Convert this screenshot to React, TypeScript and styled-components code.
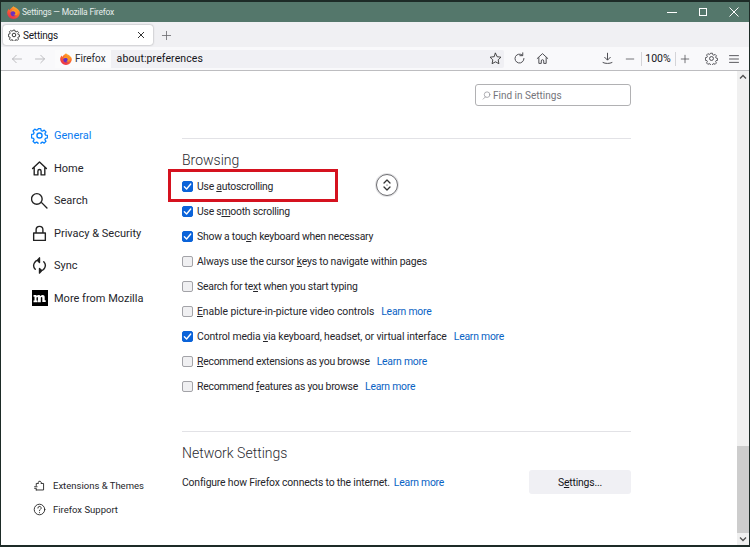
import React from "react";
import styled, { createGlobalStyle } from "styled-components";

const Global = createGlobalStyle`
  html, body { margin: 0; padding: 0; background: #fff; }
  #root { width: 750px; height: 547px; overflow: hidden; }
  * { box-sizing: border-box; }
`;

const FONT = `Roboto, "Open Sans", "Liberation Sans", sans-serif`;

const Window = styled.div`
  width: 750px; height: 547px; display: flex; flex-direction: column;
  border: solid #1d2b27; border-width: 2px 1px 2px 1px;
  font-family: ${FONT}; color: #15141a; background: #fff; overflow: hidden;
`;
const TitleBar = styled.div`
  height: 20px; flex: none; background: #54776b; display: flex; align-items: center;
  padding-left: 6px; color: #e6eeeb; font-size: 8.5px; letter-spacing: -0.2px; gap: 2px;
`;
const TitleText = styled.span`flex: 1;`;
const WinButtons = styled.div`display: flex; align-items: center; color: #fff;`;
const WinButton = styled.div`width: 31px; height: 20px; display: flex; align-items: center; justify-content: center;`;
const TabStrip = styled.div`
  height: 25px; flex: none; background: #f0f0f3; display: flex; align-items: flex-start; padding: 3px 0 0 2px;
`;
const Tab = styled.div`
  width: 150px; height: 20px; background: #fff; border-radius: 3px; box-shadow: 0 0 2px rgba(0,0,0,.4);
  display: flex; align-items: center; padding: 0 8px 0 5px; gap: 3px; font-size: 10px; letter-spacing: -0.2px; color: #15141a;
`;
const TabLabel = styled.span`flex: 1;`;
const NewTab = styled.div`width: 26px; height: 20px; display: flex; align-items: center; justify-content: center; color: #6b6b70;`;
const NavBar = styled.div`
  height: 24px; flex: none; background: #f9f9fb; border-bottom: 1px solid #bdbdc0;
  display: flex; align-items: center; padding: 0 0 0 4px;
`;
const NavIcon = styled.div<{ $w?: number }>`
  width: ${(p) => p.$w ?? 23}px; height: 20px; flex: none; display: flex; align-items: center; justify-content: center;
`;
const UrlBar = styled.div`
  width: 449px; height: 18px; margin-left: 4px; background: #f0f0f4; display: flex; align-items: center; flex: none;
  font-size: 10.5px; color: #15141a; border-radius: 2px;
`;
const Identity = styled.div`
  height: 18px; background: #fbfbfc; display: flex; align-items: center; gap: 3px; padding: 0 5px; margin-right: 6px; font-size: 10px; color: #2a2a2e;
`;
const UrlText = styled.span`flex: 1; letter-spacing: 0.1px;`;
const Spacer = styled.div<{ $w: number }>`width: ${(p) => p.$w}px; flex: none;`;
const Zoom = styled.div`
  font-size: 10.5px; color: #15141a; width: 35px; height: 14px; text-align: center; line-height: 13px; flex: none;
  border-left: 1px solid #d4d4d8; border-right: 1px solid #d4d4d8;
`;
const Body = styled.div`flex: 1; display: flex; min-height: 0; position: relative;`;
const Sidebar = styled.nav`
  width: 181px; flex: none; display: flex; flex-direction: column; padding: 48.5px 0 0 30px;
`;
const NavList = styled.div`display: flex; flex-direction: column; flex: 1;`;
const NavItem = styled.div<{ $active?: boolean }>`
  height: 32.5px; display: flex; align-items: center; gap: 6px; font-size: 11px;
  color: ${(p) => (p.$active ? "#0a7cf0" : "#26262b")};
`;
const IconSlot = styled.div`width: 17px; height: 17px; flex: none; display: flex; align-items: center; justify-content: center;`;
const FootList = styled.div`display: flex; flex-direction: column; padding-bottom: 23px;`;
const FootItem = styled.div`
  height: 24.5px; display: flex; align-items: center; gap: 7px; padding-left: 2px; font-size: 9.5px; color: #26262b;
`;
const FootIcon = styled.div`width: 13px; height: 13px; display: flex; align-items: center; justify-content: center; flex: none;`;
const Main = styled.main`width: 449px; flex: none; display: flex; flex-direction: column; padding-top: 13px;`;
const SearchRow = styled.div`display: flex; justify-content: flex-end;`;
const SearchBox = styled.div`
  width: 156px; height: 22px; border: 1px solid #b1b1b3; border-radius: 3px; display: flex; align-items: center;
  padding: 1px 0 0 6px; gap: 2px; font-size: 10px; color: #74747a; background: #fff;
`;
const Rule = styled.hr<{ $top: number }>`border: 0; height: 1px; background: #e2e2e6; margin: ${(p) => p.$top}px 0 0; flex: none;`;
const Heading = styled.h2`
  margin: 11px 0 0; font-weight: 300; font-size: 14px; line-height: 20px; color: #2a2a30;
`;
const Rows = styled.div`display: flex; flex-direction: column; margin-top: 4px;`;
const Row = styled.div<{ $track?: number }>`
  height: 25px; display: flex; align-items: center; font-size: 10.4px; letter-spacing: ${(p) => p.$track ?? -0.23}px; color: #26262b; position: relative;
`;
const Box = styled.span<{ $on?: boolean }>`
  width: 11px; height: 11px; border-radius: 2px; flex: none; margin-right: 4px; display: flex; align-items: center; justify-content: center;
  background: ${(p) => (p.$on ? "#0b63d9" : "#f0f0f2")};
  border: 1px solid ${(p) => (p.$on ? "#0b63d9" : "#a3a3a8")};
`;
const Label = styled.span`white-space: nowrap;`;
const Key = styled.span`text-decoration: underline; text-underline-offset: 1px; text-decoration-thickness: 1px;`;
const Learn = styled.a<{ $gap?: number }>`color: #0a63c4; margin-left: ${(p) => p.$gap ?? 7}px; letter-spacing: -0.23px; white-space: nowrap; cursor: pointer;`;
const Highlight = styled.div`
  position: absolute; left: -14px; top: -5px; width: 170px; height: 33px; border: 3px solid #d5121f; pointer-events: none;
`;
const AutoScrollMark = styled.div`
  position: absolute; left: 194px; top: 0; width: 22px; height: 22px; border-radius: 50%; border: 1px solid #6e6e72;
  background: #fff; display: flex; align-items: center; justify-content: center; box-shadow: 0 0 0 1px #e4e4e6;
`;
const NetRow = styled.div`display: flex; align-items: center; justify-content: space-between; font-size: 10.4px; letter-spacing: -0.18px; color: #26262b; height: 24px; margin-top: 7px;`;
const NetText = styled.span`white-space: nowrap;`;
const SettingsBtn = styled.div`
  width: 102px; height: 24px; background: #f0f0f4; border-radius: 3px; display: flex; align-items: center; justify-content: center; color: #15141a;
`;
const ScrollTrack = styled.div`
  margin-left: auto; width: 12px; flex: none; background: #f0f0f0; display: flex; flex-direction: column; align-items: center;
  justify-content: space-between; position: relative;
`;
const Thumb = styled.div`flex: none; width: 12px; height: 87px; background: #cdcdcd; margin-top: auto;`;
const Arrow = styled.div`height: 12px; width: 12px; flex: none; display: flex; align-items: center; justify-content: center; color: #505050;`;

const Gear = ({ size = 14, color = "#3a3a3f", sw = 1.2 }: { size?: number; color?: string; sw?: number }) => (
  <svg width={size} height={size} viewBox="0 0 16 16" fill="none" stroke={color} strokeWidth={sw} strokeLinejoin="round">
    <path d="M6.700 1h2.600l.4 2 1.300.6 1.800-1.100 1.800 1.900-1.100 1.700.6 1.400 2 .4v2.500l-2 .4-.6 1.400 1.100 1.700-1.800 1.900-1.800-1.100-1.300.6-.4 2H6.700l-.4-2-1.300-.6-1.800 1.100-1.800-1.900 1.100-1.700-.6-1.400-2-.4V6.900l2-.4.6-1.400-1.100-1.700 1.800-1.900 1.800 1.100 1.300-.6z" transform="translate(.6 .6) scale(.925)" />
    <circle cx="8" cy="8" r="2.400" />
  </svg>
);

const Firefox = ({ size = 12, id }: { size?: number; id: string }) => (
  <svg width={size} height={size} viewBox="0 0 16 16">
    <defs>
      <linearGradient id={id} x1="0.8" y1="0" x2="0.2" y2="1">
        <stop offset="0" stopColor="#ffc52e" />
        <stop offset=".45" stopColor="#ff6a2c" />
        <stop offset="1" stopColor="#e8284f" />
      </linearGradient>
    </defs>
    <path d="M8 .3c1 1.300 3.700 1.800 5 3.500C14.800 5.500 15.800 7 15.800 8.400A7.800 7.500 0 0 1 .2 8.400C.2 6.400 1 4.700 2.300 3.300l.6 1.900C4 3.200 6 2.400 8 .3z" fill={`url(#${id})`} />
    <circle cx="8.200" cy="8.800" r="3.800" fill="#6a2fc0" />
    <path d="M3.900 8c1.300-1.300 3.200-1.800 4.800-1.200 1.400.6 1.900 1.800 1.400 2.900-.5 1-1.500 1.400-2.500 1.100 2.500 2.200 5.500.3 5.800-2.300-1-2.600-3-4-5-4.200-2.100-.1-3.800 1.700-4.500 3.700z" fill="#ff9a1f" />
  </svg>
);

const Line = ({ d, size = 14, color = "#4a4a4f", sw = 1.2 }: { d: string; size?: number; color?: string; sw?: number }) => (
  <svg width={size} height={size} viewBox="0 0 16 16" fill="none" stroke={color} strokeWidth={sw} strokeLinecap="round" strokeLinejoin="round">
    <path d={d} />
  </svg>
);

const Check = () => (
  <svg width="9" height="9" viewBox="0 0 10 10" fill="none" stroke="#fff" strokeWidth="1.500" strokeLinecap="round" strokeLinejoin="round">
    <path d="M1.500 5.300 4 7.800 8.600 2.200" />
  </svg>
);

const Mozilla = () => (
  <svg width="16" height="16" viewBox="0 0 16 16">
    <rect width="16" height="16" fill="#000" />
    <path d="M1.500 5h3v1c.6-.8 1.300-1.100 2.100-1.100 1 0 1.600.5 1.900 1.200.6-.8 1.400-1.200 2.200-1.200 1.300 0 2 .8 2 2.200v3.200h1v1.800H10.300V8c0-.7-.2-1-.6-1-.3 0-.6.2-.9.600v4.600H5.900V8c0-.7-.2-1-.6-1-.3 0-.6.200-.8.600v2.800h1v1.800H1.500v-1.800h1V6.800h-1z" fill="#fff" />
  </svg>
);

type Item = { on?: boolean; text: React.ReactNode; learn?: boolean; track?: number };
const items: Item[] = [
  { on: true, text: <>Use <Key>a</Key>utoscrolling</> },
  { on: true, text: <>Use s<Key>m</Key>ooth scrolling</> },
  { on: true, text: <>Show a tou<Key>c</Key>h keyboard when necessary</> },
  { text: <>Always use the cursor <Key>k</Key>eys to navigate within pages</>, track: -0.19 },
  { text: <>Search for te<Key>x</Key>t when you start typing</> },
  { text: <><Key>E</Key>nable picture-in-picture video controls</>, learn: true, track: -0.05 },
  { on: true, text: <>Control media <Key>v</Key>ia keyboard, headset, or virtual interface</>, learn: true, track: -0.11 },
  { text: <><Key>R</Key>ecommend extensions as you browse</>, learn: true },
  { text: <>Recommend <Key>f</Key>eatures as you browse</>, learn: true },
];

const navIcons: [string, React.ReactNode, boolean?][] = [
  ["General", <Gear size={17} color="#0a84ff" sw={1.3} />, true],
  ["Home", <Line size={17} color="#222" sw={1.3} d="M1.500 8 8 1.800 14.500 8M3 6.800V14h3.500v-3.500a1.500 1.500 0 0 1 3 0V14H13V6.800" />],
  ["Search", <Line size={17} color="#222" sw={1.3} d="M10.500 6.500a5 5 0 1 1-10 0 5 5 0 0 1 10 0zM10 10l5 5" />],
  ["Privacy & Security", <Line size={17} color="#222" sw={1.3} d="M2.500 7.500h11v7h-11zM4.800 7.500V4.500a3.200 3.200 0 0 1 6.400 0v3" />],
  ["Sync", <Line size={17} color="#222" sw={1.3} d="M4 11.500A5 5 0 0 1 8 3M12 4.500A5 5 0 0 1 8 13M8 .8v4.400L6 3zM8 10.800v4.400l2-2.200z" />],
  ["More from Mozilla", <Mozilla />],
];

export default function App() {
  return (
    <>
      <Global />
      <Window>
        <TitleBar>
          <Firefox size={13} id="ff1" />
          <TitleText>Settings — Mozilla Firefox</TitleText>
          <WinButtons>
            <WinButton><svg width="10" height="10" viewBox="0 0 10 10" stroke="#fff" fill="none"><path d="M0 5.500h10" /></svg></WinButton>
            <WinButton><svg width="10" height="10" viewBox="0 0 10 10" stroke="#fff" fill="none"><rect x="1.500" y="1.500" width="7" height="7" /></svg></WinButton>
            <WinButton><svg width="10" height="10" viewBox="0 0 10 10" stroke="#fff" fill="none"><path d="M.5.500l9 9M9.500.500l-9 9" /></svg></WinButton>
          </WinButtons>
        </TitleBar>
        <TabStrip>
          <Tab>
            <Gear size={12} color="#222" />
            <TabLabel>Settings</TabLabel>
            <svg width="8" height="8" viewBox="0 0 8 8" stroke="#333" fill="none"><path d="M1 1l6 6M7 1L1 7" /></svg>
          </Tab>
          <NewTab><Line size={11} color="#6b6b70" d="M8 2v12M2 8h12" /></NewTab>
        </TabStrip>
        <NavBar>
          <NavIcon><Line size={12} color="#b5b5b9" d="M14 8H2M7 3 2 8l5 5" /></NavIcon>
          <NavIcon><Line size={12} color="#b5b5b9" d="M2 8h12M9 3l5 5-5 5" /></NavIcon>
          <UrlBar>
            <Identity><Firefox size={12} id="ff2" /><span>Firefox</span></Identity>
            <UrlText>about:preferences</UrlText>
            <NavIcon $w={18}><Line size={13} color="#333" sw={1.1} d="M8 1.500l2 4.300 4.700.6-3.400 3.300.9 4.700L8 12.100l-4.200 2.300.9-4.700L1.300 6.400 6 5.800z" /></NavIcon>
          </UrlBar>
          <Spacer $w={3.5} />
          <NavIcon><Line size={13} d="M13.500 8A5.500 5.500 0 1 1 11.500 3.800M12 1v3.500H8.500" /></NavIcon>
          <NavIcon><Line size={13} d="M1.500 8 8 2l6.500 6M3.500 7v7h3v-3a1.500 1.500 0 0 1 3 0v3h3V7" /></NavIcon>
          <Spacer $w={42} />
          <NavIcon><Line size={13} d="M8 1.500v8M4.500 6.500 8 10l3.500-3.500M2.500 13c3 1.500 8 1.500 11 0" /></NavIcon>
          <NavIcon $w={22}><Line size={10} d="M2 8h12" /></NavIcon>
          <Zoom>100%</Zoom>
          <NavIcon $w={18}><Line size={10} d="M8 2v12M2 8h12" /></NavIcon>
          <Spacer $w={6} />
          <NavIcon><Gear size={13} color="#4a4a4f" /></NavIcon>
          <NavIcon><Line size={12} d="M2 3.500h12M2 8h12M2 12.500h12" /></NavIcon>
        </NavBar>
        <Body>
          <Sidebar>
            <NavList>
              {navIcons.map(([t, ic, active]) => (
                <NavItem key={t} $active={active}><IconSlot>{ic}</IconSlot><span>{t}</span></NavItem>
              ))}
            </NavList>
            <FootList>
              <FootItem>
                <FootIcon><Line size={13} color="#222" sw={1.1} d="M4 13.500h9V5.500H9.800a1.800 1.800 0 1 0-3.300-1.200c0 .5.100.9.300 1.200H4v2.500M2 9.500h3M2 11.500h2M4 12.500v1" /></FootIcon>
                <span>Extensions &amp; Themes</span>
              </FootItem>
              <FootItem>
                <FootIcon><Line size={13} color="#222" sw={1.1} d="M14.500 8a6.500 6.500 0 1 1-13 0 6.500 6.500 0 0 1 13 0zM6 6.200a2 2 0 1 1 3 1.700c-.7.400-1 .8-1 1.600M8 11.800v.2" /></FootIcon>
                <span>Firefox Support</span>
              </FootItem>
            </FootList>
          </Sidebar>
          <Main>
            <SearchRow>
              <SearchBox>
                <Line size={9} color="#8a8a90" sw={1.2} d="M14 6.500a5 5 0 1 1-10 0 5 5 0 0 1 10 0zM6 10.500 2 14.500" />
                <span>Find in Settings</span>
              </SearchBox>
            </SearchRow>
            <Rule $top={32} />
            <Heading>Browsing</Heading>
            <Rows>
              {items.map((it, i) => (
                <Row key={i} $track={it.track}>
                  <Box $on={it.on}>{it.on && <Check />}</Box>
                  <Label>{it.text}</Label>
                  {it.learn && <Learn>Learn more</Learn>}
                  {i === 0 && <Highlight />}
                  {i === 0 && (
                    <AutoScrollMark>
                      <svg width="10" height="16" viewBox="0 0 10 16" fill="none" stroke="#333" strokeWidth="1.300" strokeLinecap="round" strokeLinejoin="round">
                        <path d="M2 6 5 3l3 3M2 10l3 3 3-3" />
                        <circle cx="5" cy="8" r=".6" fill="#333" stroke="none" />
                      </svg>
                    </AutoScrollMark>
                  )}
                </Row>
              ))}
            </Rows>
            <Rule $top={32} />
            <Heading>Network Settings</Heading>
            <NetRow>
              <NetText>Configure how Firefox connects to the internet.<Learn $gap={4}>Learn more</Learn></NetText>
              <SettingsBtn><span>S<Key>e</Key>ttings...</span></SettingsBtn>
            </NetRow>
          </Main>
          <ScrollTrack>
            <Arrow><svg width="8" height="6" viewBox="0 0 8 6" fill="none" stroke="#505050" strokeWidth="1.300"><path d="M1 4.500 4 1.500l3 3" /></svg></Arrow>
            <Thumb />
            <Arrow><svg width="8" height="6" viewBox="0 0 8 6" fill="none" stroke="#505050" strokeWidth="1.300"><path d="M1 1.500 4 4.500l3-3" /></svg></Arrow>
          </ScrollTrack>
        </Body>
      </Window>
    </>
  );
}
